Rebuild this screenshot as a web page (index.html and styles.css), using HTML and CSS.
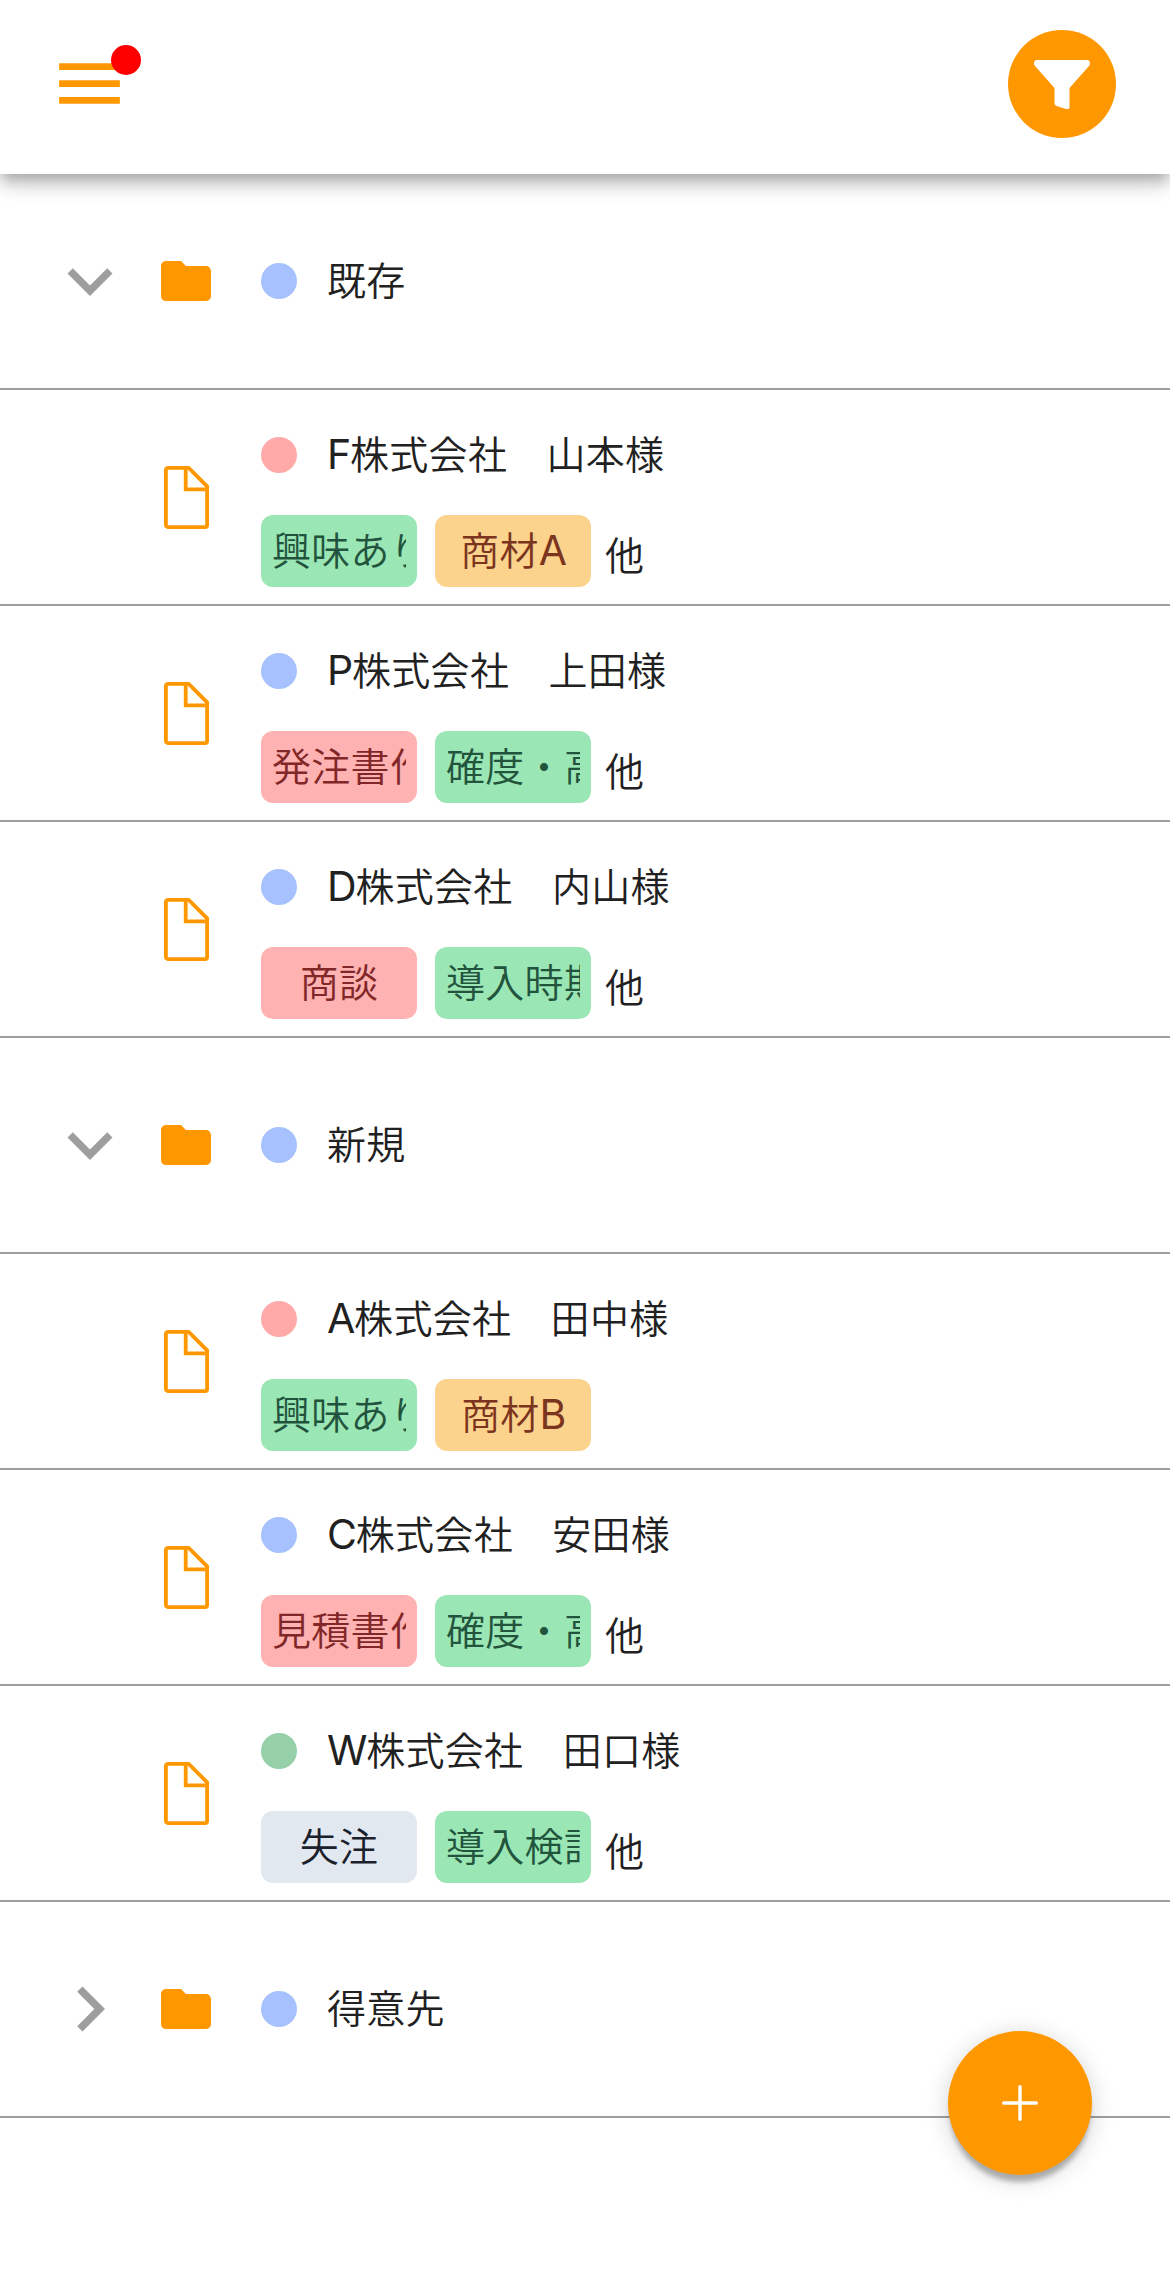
FILE: index.html
```html
<!DOCTYPE html>
<html lang="ja">
<head>
<meta charset="utf-8">
<title>顧客リスト</title>
<link rel="stylesheet" href="styles.css">
</head>
<body>
<svg class="defs" width="0" height="0">
  <symbol id="down" viewBox="0 0 24 24"><path d="M7.41 8.59 12 13.17l4.59-4.58L18 10l-6 6-6-6z"/></symbol>
  <symbol id="right" viewBox="0 0 24 24"><path d="M10 6 8.59 7.41 13.17 12l-4.58 4.59L10 18l6-6z"/></symbol>
  <symbol id="folder" viewBox="0 0 24 24"><path d="M10 4H4c-1.1 0-2 .9-2 2v12c0 1.1.9 2 2 2h16c1.1 0 2-.9 2-2V8c0-1.1-.9-2-2-2h-8z"/></symbol>
  <symbol id="doc" viewBox="0 0 47 66"><path d="M4.900 3.900h20.800L44.100 22.300V61.100a2 2 0 0 1-2 2H4.900a2 2 0 0 1-2-2V5.900a2 2 0 0 1 2-2M22.700 4v21.300H44" fill="none" stroke="currentColor" stroke-width="3.800"/></symbol>
</svg>
<header class="bar">
  <button class="menu" aria-label="メニュー">
    <svg viewBox="0 0 24 24"><path d="M3 18h18v-2H3zM3 13h18v-2H3zM3 6v2h18V6z"/></svg>
    <span class="badge"></span>
  </button>
  <button class="filter" aria-label="絞り込み">
    <svg viewBox="0 0 56 49"><path d="M3 0H53C56 0 57 4 55 6L35.500 28V47C35.500 49 34 49.500 32 49L22 45.800Q20.500 45 20.500 43.500V28L1 6C-1 4 0 0 3 0Z"/></svg>
  </button>
</header>
<main class="list">
  <section class="row"><svg class="chev"><use href="#down"/></svg><svg class="folder"><use href="#folder"/></svg><div class="name"><i class="dot blue"></i><span>既存</span></div></section>
  <section class="row item"><svg class="doc"><use href="#doc"/></svg><div class="body"><div class="name"><i class="dot red"></i><span><b>F</b>株式会社　山本様</span></div><div class="tags"><span class="tag t-green"><span>興味あり</span></span><span class="tag t-orange"><span>商材<b>A</b></span></span><span class="more">他</span></div></div></section>
  <section class="row item"><svg class="doc"><use href="#doc"/></svg><div class="body"><div class="name"><i class="dot blue"></i><span><b>P</b>株式会社　上田様</span></div><div class="tags"><span class="tag t-red"><span>発注書作</span></span><span class="tag t-green"><span>確度・高</span></span><span class="more">他</span></div></div></section>
  <section class="row item"><svg class="doc"><use href="#doc"/></svg><div class="body"><div class="name"><i class="dot blue"></i><span><b>D</b>株式会社　内山様</span></div><div class="tags"><span class="tag t-red"><span>商談</span></span><span class="tag t-green"><span>導入時期</span></span><span class="more">他</span></div></div></section>
  <section class="row"><svg class="chev"><use href="#down"/></svg><svg class="folder"><use href="#folder"/></svg><div class="name"><i class="dot blue"></i><span>新規</span></div></section>
  <section class="row item"><svg class="doc"><use href="#doc"/></svg><div class="body"><div class="name"><i class="dot red"></i><span><b>A</b>株式会社　田中様</span></div><div class="tags"><span class="tag t-green"><span>興味あり</span></span><span class="tag t-orange"><span>商材<b>B</b></span></span></div></div></section>
  <section class="row item"><svg class="doc"><use href="#doc"/></svg><div class="body"><div class="name"><i class="dot blue"></i><span><b>C</b>株式会社　安田様</span></div><div class="tags"><span class="tag t-red"><span>見積書作</span></span><span class="tag t-green"><span>確度・高</span></span><span class="more">他</span></div></div></section>
  <section class="row item"><svg class="doc"><use href="#doc"/></svg><div class="body"><div class="name"><i class="dot green"></i><span><b>W</b>株式会社　田口様</span></div><div class="tags"><span class="tag t-gray"><span>失注</span></span><span class="tag t-green"><span>導入検討</span></span><span class="more">他</span></div></div></section>
  <section class="row"><svg class="chev"><use href="#right"/></svg><svg class="folder"><use href="#folder"/></svg><div class="name"><i class="dot blue"></i><span>得意先</span></div></section>
</main>
<button class="fab" aria-label="追加"><svg viewBox="0 0 36 36"><path d="M18 1.700v32.600M1.700 18h32.600"/></svg></button>
</body>
</html>
```
FILE: styles.css
```css
* { box-sizing: border-box; }
body {
  margin: 0;
  min-height: 2272px;
  background: #fff;
  color: #212121;
  font: 350 39px/60px "Noto Sans CJK JP DemiLight", "Noto Sans CJK JP", sans-serif;
  letter-spacing: 0.3px;
}
button { border: 0; padding: 0; background: none; }
svg { display: block; flex: none; fill: currentColor; }
.defs { position: absolute; }
b { font-family: Inter, sans-serif; font-weight: 400; font-size: 41px; line-height: 1; letter-spacing: -1.2px; }

.bar {
  position: relative;
  z-index: 1;
  display: flex;
  justify-content: space-between;
  height: 174px;
  padding: 30px 54px 0 49px;
  background: #fff;
  color: #ff9800;
  box-shadow: 0 6px 12px -3px rgba(0,0,0,.2), 0 12px 15px rgba(0,0,0,.14), 0 3px 30px rgba(0,0,0,.12);
}
.menu { position: relative; width: 81px; height: 81px; margin-top: 13px; color: inherit; }
.menu svg { width: 81px; height: 81px; }
.badge { position: absolute; left: 62px; top: 2px; width: 30px; height: 30px; border-radius: 50%; background: #f00; }
.filter { display: flex; justify-content: center; width: 108px; height: 108px; padding-top: 30px; border-radius: 50%; background: #ff9800; color: #fff; }
.filter svg { width: 56px; height: 49px; }

.row { display: flex; align-items: center; height: 216px; padding-left: 45px; border-bottom: 2px solid #9e9e9e; }
.chev { width: 90px; height: 90px; margin-right: 21px; color: #9e9e9e; }
.folder { width: 60px; height: 60px; margin-right: 45px; color: #ff9800; }
.item { padding-left: 163px; }
.doc { width: 47px; height: 66px; margin-right: 51px; color: #ff9800; }
.body { align-self: stretch; padding-top: 35px; }
.name { display: flex; align-items: center; gap: 30px; height: 60px; white-space: nowrap; }
.name > span { padding-bottom: 6px; }
.dot { width: 36px; height: 36px; border-radius: 50%; }
.blue { background: #a7c1ff; }
.red { background: #ffa9a9; }
.green { background: #96d0a9; }
.tags { display: flex; margin-top: 30px; gap: 18px; }
.tag { display: flex; width: 156px; height: 72px; padding: 3px 11px 9px 11px; border-radius: 12px; }
.tag > span { flex: 1; overflow: hidden; text-align: center; white-space: nowrap; }
.t-green { background: #9ae6b4; color: #22543d; }
.t-orange { background: #fbd38d; color: #7b341e; }
.t-red { background: #feb2b2; color: #822727; }
.t-gray { background: #e2e8f0; color: #1a202c; }
.more { margin: 8px 0 0 -4px; }

.fab {
  position: fixed;
  left: 948px;
  top: 2031px;
  display: grid;
  place-items: center;
  width: 144px;
  height: 144px;
  border-radius: 50%;
  background: #ff9800;
  box-shadow: 0 9px 5px -2px rgba(0,0,0,.26), 0 4px 24px rgba(0,0,0,.18);
}
.fab svg { width: 36px; height: 36px; fill: none; stroke: #fff; stroke-width: 3.4; stroke-linecap: round; }
```
